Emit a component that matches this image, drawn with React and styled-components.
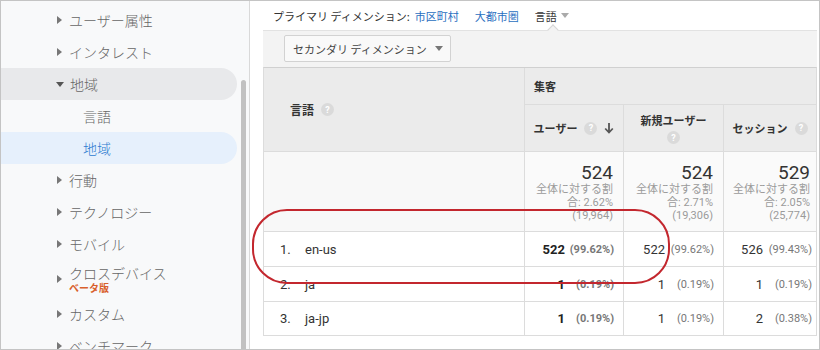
import React from "react";
import styled, { createGlobalStyle } from "styled-components";

const Global = createGlobalStyle`
  html, body { margin: 0; padding: 0; background: #fff; }
  body { font-family: Roboto, "Noto Sans CJK JP", sans-serif; overflow: hidden; }
  * { box-sizing: border-box; }
`;

const Frame = styled.div`
  position: relative;
  width: 820px;
  height: 350px;
  border: 1px solid #c4c4c4;
  display: flex;
  overflow: hidden;
  background: #fff;
`;

/* ---------- sidebar ---------- */
const Sidebar = styled.aside`
  width: 249px;
  flex: none;
  display: flex;
  background: #f8f9fa;
  border-right: 1px solid #d9d9d9;
`;

const Nav = styled.nav`
  width: 239px;
  padding-top: 3px;
  display: flex;
  flex-direction: column;
`;

const NavItem = styled.div`
  width: 236px;
  height: ${(p) => p.$h || 32}px;
  display: flex;
  align-items: center;
  padding-left: ${(p) => (p.$sub ? 82 : 56)}px;
  border-radius: 0 16px 16px 0;
  background: ${(p) => (p.$selected ? "#e6f0fc" : p.$open ? "#e8e9eb" : "transparent")};
  color: ${(p) => (p.$selected ? "#2c7bd0" : "#666")};
  font-family: "Noto Sans CJK JP", sans-serif;
  font-weight: 300;
  font-size: 14px;
  flex: none;
`;

const Arrow = styled.span`
  width: 0;
  height: 0;
  flex: none;
  margin-right: 7px;
  ${(p) =>
    p.$down
      ? `border-left: 4px solid transparent; border-right: 4px solid transparent; border-top: 5px solid #555; margin-left: -1px; margin-right: 6px;`
      : `border-top: 4px solid transparent; border-bottom: 4px solid transparent; border-left: 5px solid #777;`}
`;

const Stack = styled.div`
  display: flex;
  flex-direction: column;
  padding-top: 1px;
`;

const StackTitle = styled.span`
  line-height: 16px;
`;

const Beta = styled.span`
  color: #d9602c;
  font-size: 10px;
  font-weight: 700;
  line-height: 13px;
`;

const ScrollCol = styled.div`
  width: 9px;
  padding-top: 79px;
  padding-left: 1px;
`;

const Thumb = styled.div`
  width: 5px;
  height: 100%;
  background: #c1c1c1;
  border-radius: 3px 3px 0 0;
`;

/* ---------- main ---------- */
const Main = styled.main`
  flex: 1;
  padding: 0 3px 0 13px;
  display: flex;
  flex-direction: column;
`;

const TopBar = styled.div`
  height: 29px;
  display: flex;
  align-items: center;
  padding-left: 10px;
  font-family: "Noto Sans CJK JP", sans-serif;
  font-size: 11px;
  color: #333;
`;

const DimLabel = styled.span`
  margin-right: 5px;
`;

const DimLink = styled.span`
  color: ${(p) => (p.$active ? "#333" : "#2a6fbf")};
  margin-right: 16px;
  display: inline-flex;
  align-items: center;
`;

const SmallCaret = styled.span`
  width: 0;
  height: 0;
  margin-left: 4px;
  border-left: 4px solid transparent;
  border-right: 4px solid transparent;
  border-top: 5px solid #aaa;
`;

const Panel = styled.div`
  position: relative;
  background: #f3f3f3;
  border-top: 1px solid #e2e2e2;
  padding: 4px 0 5px 21px;
`;

const Notch = styled.span`
  position: absolute;
  top: -5px;
  left: 286px;
  width: 8px;
  height: 8px;
  background: #f3f3f3;
  border-left: 1px solid #d6d6d6;
  border-top: 1px solid #d6d6d6;
  transform: rotate(45deg);
`;

const SecondaryButton = styled.div`
  width: 167px;
  height: 27px;
  display: flex;
  align-items: center;
  padding-left: 8px;
  background: #f9f9f9;
  border: 1px solid #d2d2d2;
  border-radius: 2px;
  font-family: "Noto Sans CJK JP", sans-serif;
  font-size: 11px;
  color: #444;
`;

const ButtonCaret = styled.span`
  width: 0;
  height: 0;
  margin-left: 8px;
  border-left: 4px solid transparent;
  border-right: 4px solid transparent;
  border-top: 5px solid #777;
`;

const Table = styled.div`
  display: grid;
  grid-template-columns: 260px 99px 100px 93px;
  grid-template-rows: 37px 47px 80px 35px 35px 34px;
  border-top: 1px solid #d0d0d0;
  border-left: 1px solid #dcdcdc;
  border-right: 1px solid #dcdcdc;
`;

const Cell = styled.div`
  border-bottom: 1px solid #dcdcdc;
  border-left: ${(p) => (p.$first ? "none" : "1px solid #dcdcdc")};
  background: ${(p) => p.$bg || "#fff"};
  display: flex;
  align-items: center;
  min-width: 0;
`;

const HeadLabel = styled(Cell)`
  grid-row: span 2;
  padding-left: 26px;
  font-family: "Noto Sans CJK JP", sans-serif;
  font-size: 12px;
  font-weight: 700;
  color: #333;
  gap: 7px;
`;

const GroupHead = styled(Cell)`
  grid-column: span 3;
  padding-left: 9px;
  font-family: "Noto Sans CJK JP", sans-serif;
  font-size: 11px;
  font-weight: 700;
  color: #333;
`;

const MetricHead = styled(Cell)`
  justify-content: center;
  flex-wrap: wrap;
  align-content: center;
  text-align: center;
  gap: ${(p) => (p.$wrap ? "3px 0" : "0 7px")};
  padding: 0 5px;
  font-family: "Noto Sans CJK JP", sans-serif;
  font-size: 11px;
  font-weight: 700;
  color: #333;
`;

const HeadText = styled.span`
  ${(p) => (p.$block ? "flex-basis: 100%;" : "")}
`;

const Help = styled.span`
  width: 13px;
  height: 13px;
  border-radius: 50%;
  background: #dadada;
  color: #fff;
  font-family: Roboto, sans-serif;
  font-size: 9px;
  font-weight: 700;
  display: inline-flex;
  align-items: center;
  justify-content: center;
  flex: none;
`;

const TotalCell = styled(Cell)`
  flex-direction: column;
  align-items: flex-end;
  justify-content: flex-start;
  padding: 11px ${(p) => p.$pr || 10}px 0 0;
  text-align: right;
`;

const TotalNum = styled.div`
  font-family: Roboto, sans-serif;
  font-size: 19px;
  line-height: 20px;
  color: #333;
`;

const TotalSub = styled.div`
  font-family: Roboto, "Noto Sans CJK JP", sans-serif;
  font-size: 11px;
  line-height: 13px;
  color: #9a9a9a;
`;

const RowLabel = styled(Cell)`
  padding-left: 16px;
  font-family: Roboto, sans-serif;
  font-size: 13px;
  color: #333;
`;

const Index = styled.span`
  width: 25px;
  flex: none;
`;

const ValueCell = styled(Cell)`
  justify-content: flex-end;
  padding-right: ${(p) => p.$pr || 9}px;
  font-family: Roboto, sans-serif;
  font-weight: ${(p) => (p.$bold ? 700 : 400)};
`;

const Count = styled.span`
  font-size: 13px;
  color: ${(p) => (p.$bold ? "#222" : "#333")};
`;

const Pct = styled.span`
  width: 49px;
  text-align: right;
  font-size: 11px;
  color: #777;
`;

const Highlight = styled.div`
  position: absolute;
  left: 251px;
  top: 208px;
  width: 418px;
  height: 75px;
  border: 2px solid #c3272e;
  border-radius: 35px;
  pointer-events: none;
`;

const SortArrow = () => (
  <svg width="10" height="12" viewBox="0 0 10 12" style={{ flex: "none" }}>
    <path d="M5 1v9.5M1.2 6.5 5 10.5l3.8-4" fill="none" stroke="#555" strokeWidth="1.8" />
  </svg>
);

const navItems = [
  { label: "ユーザー属性" },
  { label: "インタレスト" },
  { label: "地域", open: true },
  { label: "言語", sub: true },
  { label: "地域", sub: true, selected: true },
  { label: "行動" },
  { label: "テクノロジー" },
  { label: "モバイル" },
  { label: "クロスデバイス", beta: true, h: 38 },
  { label: "カスタム" },
  { label: "ベンチマーク" },
];

const totals = [
  { n: "524", pct: "2.62%", all: "(19,964)", pr: 10 },
  { n: "524", pct: "2.71%", all: "(19,306)", pr: 10 },
  { n: "529", pct: "2.05%", all: "(25,774)", pr: 6 },
];

const rows = [
  { i: "1.", name: "en-us", v: [["522", "(99.62%)"], ["522", "(99.62%)"], ["526", "(99.43%)"]] },
  { i: "2.", name: "ja", v: [["1", "(0.19%)"], ["1", "(0.19%)"], ["1", "(0.19%)"]] },
  { i: "3.", name: "ja-jp", v: [["1", "(0.19%)"], ["1", "(0.19%)"], ["2", "(0.38%)"]] },
];

export default function App() {
  return (
    <>
      <Global />
      <Frame>
        <Sidebar>
          <Nav>
            {navItems.map((it, k) => (
              <NavItem key={k} $sub={it.sub} $open={it.open} $selected={it.selected} $h={it.h}>
                {!it.sub && <Arrow $down={it.open} />}
                {it.beta ? (
                  <Stack>
                    <StackTitle>{it.label}</StackTitle>
                    <Beta>ベータ版</Beta>
                  </Stack>
                ) : (
                  it.label
                )}
              </NavItem>
            ))}
          </Nav>
          <ScrollCol>
            <Thumb />
          </ScrollCol>
        </Sidebar>

        <Main>
          <TopBar>
            <DimLabel>プライマリ ディメンション:</DimLabel>
            <DimLink>市区町村</DimLink>
            <DimLink>大都市圏</DimLink>
            <DimLink $active>
              言語
              <SmallCaret />
            </DimLink>
          </TopBar>
          <Panel>
            <Notch />
            <SecondaryButton>
              セカンダリ ディメンション
              <ButtonCaret />
            </SecondaryButton>
          </Panel>
          <Table>
            <HeadLabel $first $bg="#ebebeb">
              言語 <Help>?</Help>
            </HeadLabel>
            <GroupHead $bg="#ebebeb">集客</GroupHead>
            <MetricHead $bg="#ebebeb">
              <HeadText>ユーザー</HeadText>
              <Help>?</Help>
              <SortArrow />
            </MetricHead>
            <MetricHead $bg="#ebebeb" $wrap>
              <HeadText $block>新規ユーザー</HeadText>
              <Help>?</Help>
            </MetricHead>
            <MetricHead $bg="#ebebeb">
              <HeadText>セッション</HeadText>
              <Help>?</Help>
            </MetricHead>

            <Cell $first $bg="#f8f8f8" />
            {totals.map((t, k) => (
              <TotalCell key={k} $bg="#fafafa" $pr={t.pr}>
                <TotalNum>{t.n}</TotalNum>
                <TotalSub>全体に対する割</TotalSub>
                <TotalSub>合: {t.pct}</TotalSub>
                <TotalSub>{t.all}</TotalSub>
              </TotalCell>
            ))}

            {rows.map((r) => (
              <React.Fragment key={r.i}>
                <RowLabel $first>
                  <Index>{r.i}</Index>
                  {r.name}
                </RowLabel>
                {r.v.map(([c, p], k) => (
                  <ValueCell key={k} $bold={k === 0} $pr={k === 2 ? 4 : 9}>
                    <Count $bold={k === 0}>{c}</Count>
                    <Pct>{p}</Pct>
                  </ValueCell>
                ))}
              </React.Fragment>
            ))}
          </Table>
        </Main>
        <Highlight />
      </Frame>
    </>
  );
}
